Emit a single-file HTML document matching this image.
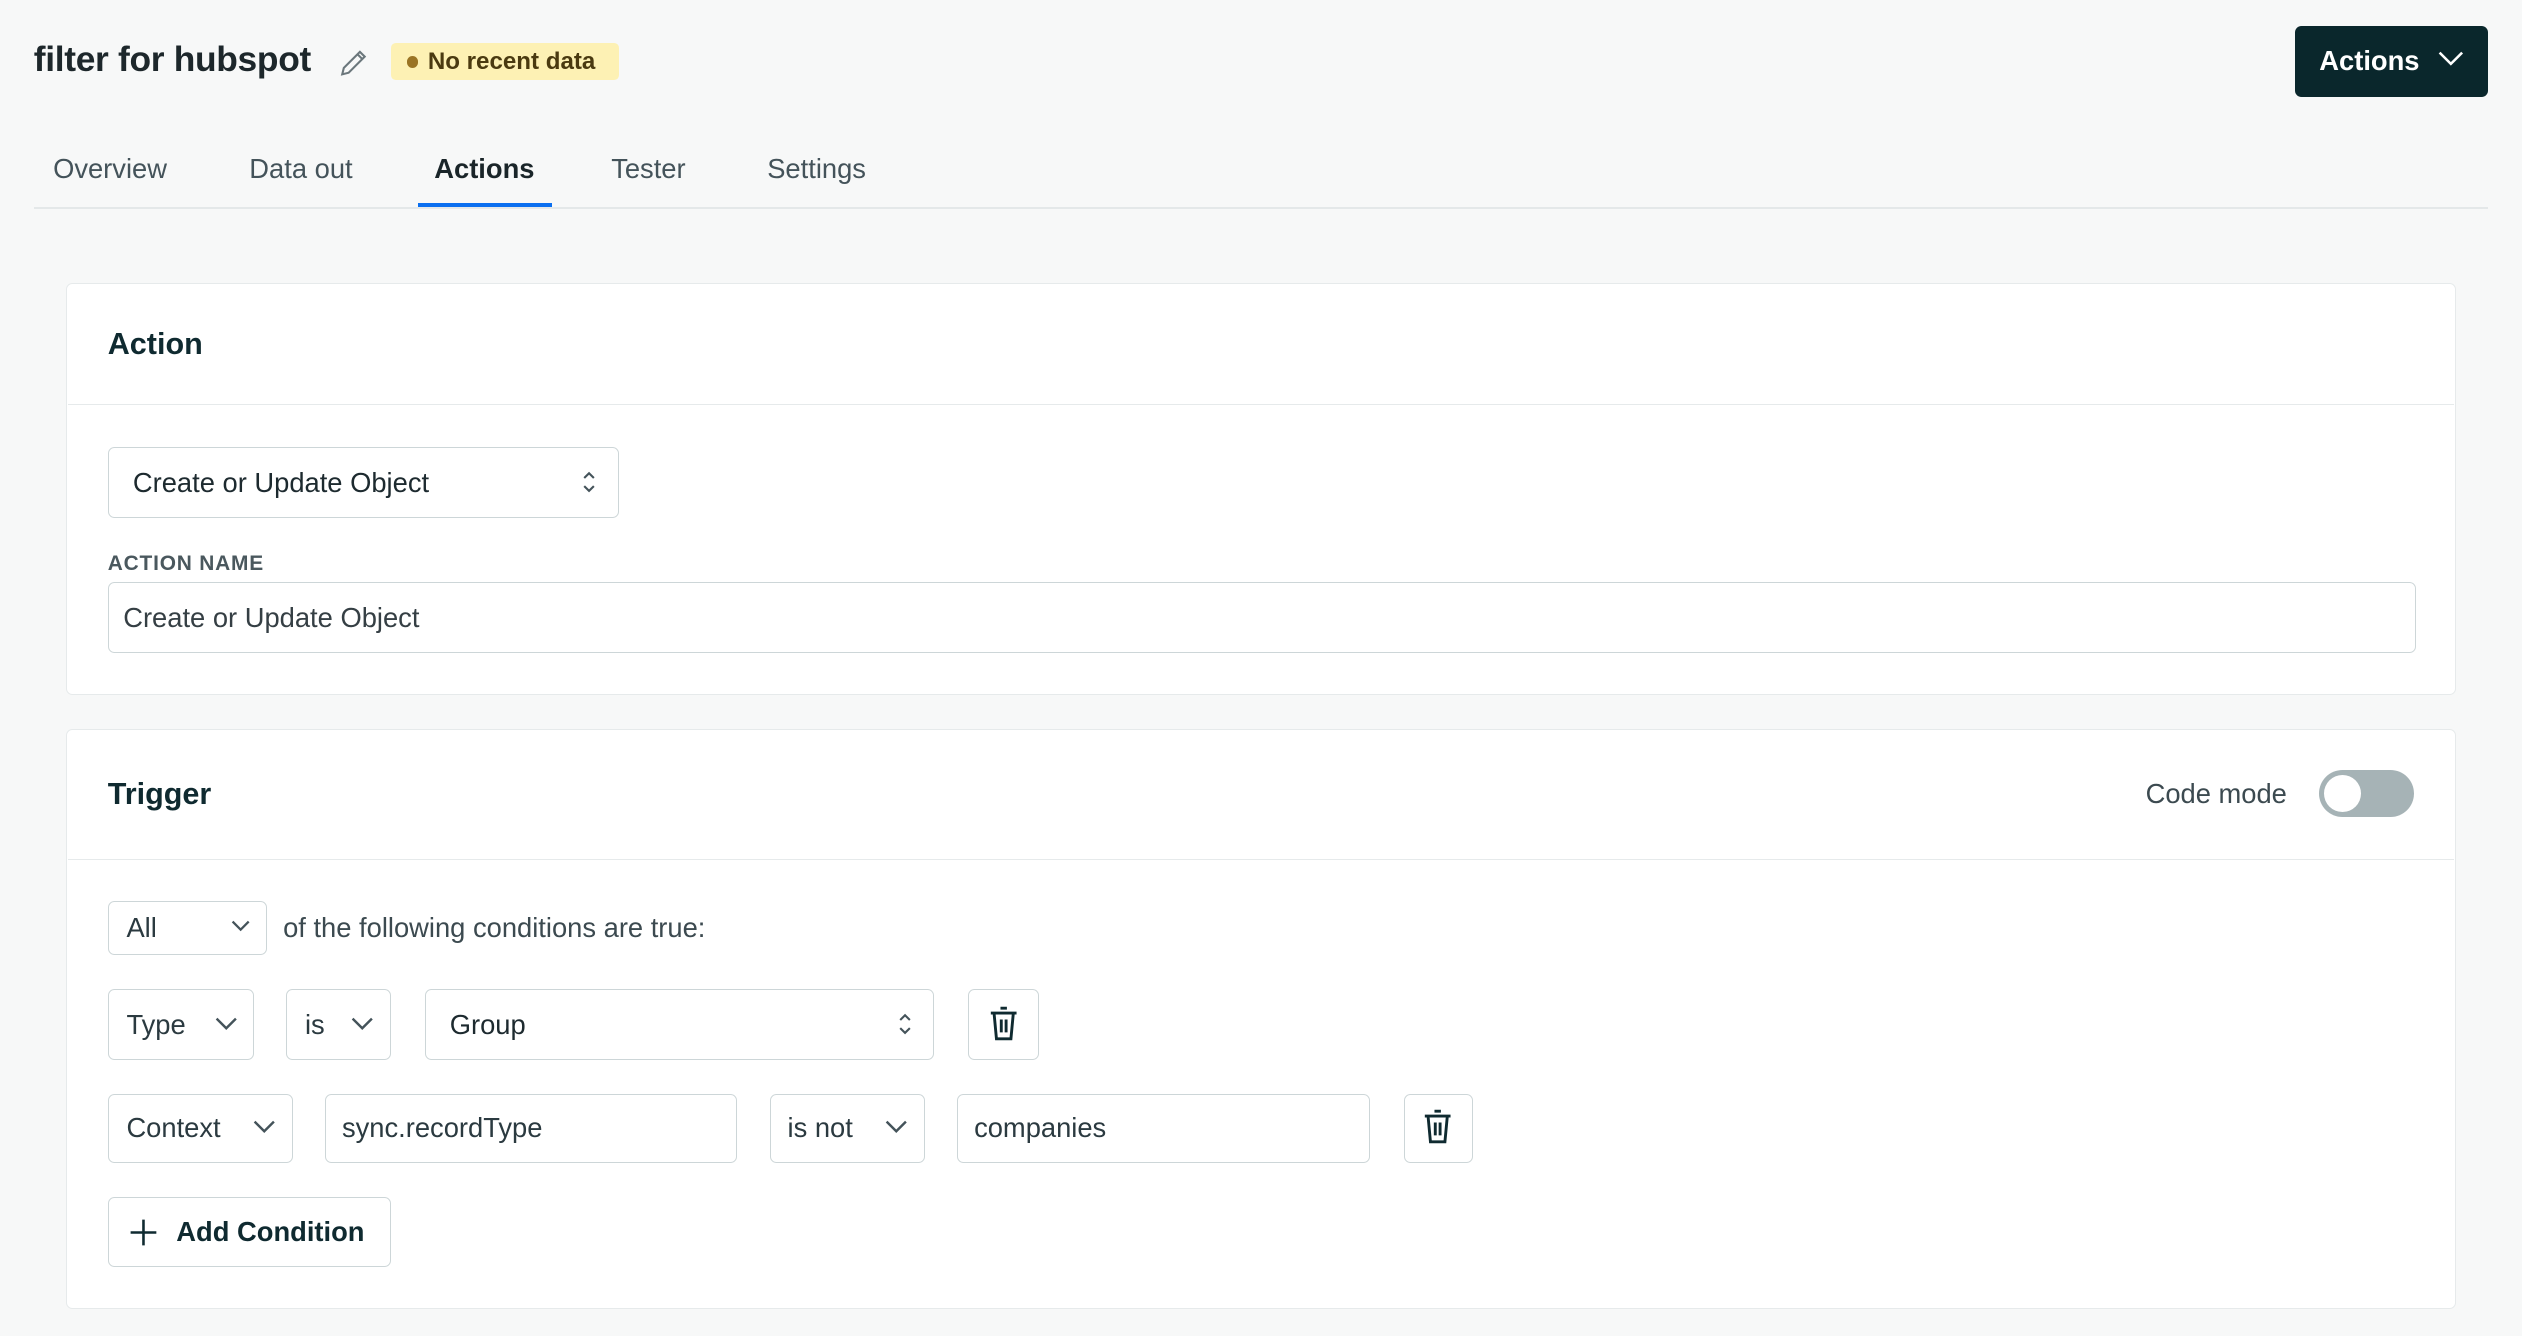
<!DOCTYPE html>
<html><head><meta charset="utf-8"><style>
html,body{margin:0;padding:0;background:#f7f8f8;width:2522px;height:1336px;overflow:hidden}
#w{zoom:1.6084;position:relative;width:1568px;height:831px;font-family:"Liberation Sans",sans-serif;color:#1f2d33}
.a{position:absolute}
.box{position:absolute;background:#fff;border:1px solid #cdd6d8;border-radius:4px;box-sizing:border-box;font-size:17px;color:#2b3a40;display:flex;align-items:center;padding-left:11px}
.card{position:absolute;background:#fff;border:1px solid #e6eaeb;border-radius:4px;box-sizing:border-box}
.chev{position:absolute;right:10px;top:50%;margin-top:-5px}
.tab{position:absolute;top:95px;font-size:17px;color:#44535a}
</style></head><body><div id="w">
<div class="a" style="left:21px;top:25px;font-size:22px;font-weight:bold;color:#1d272b;letter-spacing:-0.2px">filter for hubspot</div>
<svg class="a" style="left:211px;top:29px" width="18" height="19" viewBox="0 0 18 19"><path d="M2 17l1-4L13 3l3 3L6 16z M11.5 4.5l3 3" fill="none" stroke="#6b777c" stroke-width="1.3"/></svg>
<div class="a" style="left:243px;top:27px;width:142px;height:23px;background:#fdf1b4;border-radius:3px;font-size:15px;font-weight:bold;color:#4a3a10;line-height:23px;padding-left:23px;box-sizing:border-box">No recent data</div>
<div class="a" style="left:253px;top:35px;width:7px;height:7px;border-radius:50%;background:#9a7424"></div>
<div class="a" style="left:1427px;top:16px;width:120px;height:44px;background:#0a272c;border-radius:4px;color:#fff;font-size:17px;font-weight:bold;line-height:44px;padding-left:15px;box-sizing:border-box">Actions</div>
<svg class="a" style="left:1516px;top:32px" width="16" height="10"><path d="M1 1l7 7 7-7" fill="none" stroke="#fff" stroke-width="1.6"/></svg>
<div class="tab" style="left:33px">Overview</div>
<div class="tab" style="left:155px">Data out</div>
<div class="tab" style="left:270px;font-weight:bold;color:#1a2529">Actions</div>
<div class="tab" style="left:380px">Tester</div>
<div class="tab" style="left:477px">Settings</div>
<div class="a" style="left:21px;top:129px;width:1526px;height:1px;background:#e4e8e9"></div>
<div class="a" style="left:260px;top:126px;width:83px;height:3px;background:#0a6ff0"></div>

<div class="card" style="left:41px;top:176px;width:1486px;height:256px"></div>
<div class="a" style="left:67px;top:203px;font-size:19px;font-weight:bold;color:#0f2a30">Action</div>
<div class="a" style="left:42px;top:251px;width:1484px;height:1px;background:#e6eaeb"></div>
<div class="box" style="left:67px;top:278px;width:318px;height:44px;padding-left:15px;color:#1d2a2f">Create or Update Object</div>
<svg class="a" style="left:361px;top:292px" width="10" height="15"><path d="M2 5l3-3 3 3M2 10l3 3 3-3" fill="none" stroke="#44535a" stroke-width="1.3"/></svg>
<div class="a" style="left:67px;top:343px;font-size:13px;font-weight:bold;letter-spacing:.5px;color:#4a585e">ACTION NAME</div>
<div class="box" style="left:67px;top:362px;width:1435px;height:44px;padding-left:9px;color:#353f44">Create or Update Object</div>

<div class="card" style="left:41px;top:453px;width:1486px;height:361px"></div>
<div class="a" style="left:67px;top:483px;font-size:19px;font-weight:bold;color:#0f2a30">Trigger</div>
<div class="a" style="left:1334px;top:484px;font-size:17px;color:#3c4a50">Code mode</div>
<div class="a" style="left:1442px;top:479px;width:59px;height:29px;border-radius:15px;background:#a6b3b6"></div>
<div class="a" style="left:1445px;top:482px;width:23px;height:23px;border-radius:50%;background:#fff"></div>
<div class="a" style="left:42px;top:534px;width:1484px;height:1px;background:#e6eaeb"></div>

<div class="box" style="left:67px;top:560px;width:99px;height:34px">All<svg class="chev" width="12" height="8"><path d="M1 1l5 5 5-5" fill="none" stroke="#44535a" stroke-width="1.4"/></svg></div>
<div class="a" style="left:176px;top:567px;font-size:17px;color:#3c4a50">of the following conditions are true:</div>

<div class="box" style="left:67px;top:615px;width:91px;height:44px">Type<svg class="chev" width="14" height="9"><path d="M1 1l6 6 6-6" fill="none" stroke="#44535a" stroke-width="1.5"/></svg></div>
<div class="box" style="left:178px;top:615px;width:65px;height:44px">is<svg class="chev" width="14" height="9"><path d="M1 1l6 6 6-6" fill="none" stroke="#44535a" stroke-width="1.5"/></svg></div>
<div class="box" style="left:264px;top:615px;width:317px;height:44px;padding-left:15px;color:#1d2a2f">Group</div>
<svg class="a" style="left:558px;top:629px" width="10" height="15"><path d="M2 5l3-3 3 3M2 10l3 3 3-3" fill="none" stroke="#44535a" stroke-width="1.3"/></svg>
<div class="box" style="left:602px;top:615px;width:44px;height:44px"></div>
<svg class="a" style="left:613px;top:625px" width="22" height="24" viewBox="0 0 22 24"><path d="M9 2h4M3 5h16M5 5l1.5 16h9L17 5M9.5 9v8M12.5 9v8" fill="none" stroke="#0f2a30" stroke-width="1.8"/></svg>

<div class="box" style="left:67px;top:680px;width:115px;height:43px">Context<svg class="chev" width="14" height="9"><path d="M1 1l6 6 6-6" fill="none" stroke="#44535a" stroke-width="1.5"/></svg></div>
<div class="box" style="left:202px;top:680px;width:256px;height:43px;padding-left:10px">sync.recordType</div>
<div class="box" style="left:479px;top:680px;width:96px;height:43px;padding-left:10px">is not<svg class="chev" width="14" height="9"><path d="M1 1l6 6 6-6" fill="none" stroke="#44535a" stroke-width="1.5"/></svg></div>
<div class="box" style="left:595px;top:680px;width:257px;height:43px;padding-left:10px">companies</div>
<div class="box" style="left:873px;top:680px;width:43px;height:43px"></div>
<svg class="a" style="left:883px;top:689px" width="22" height="24" viewBox="0 0 22 24"><path d="M9 2h4M3 5h16M5 5l1.5 16h9L17 5M9.5 9v8M12.5 9v8" fill="none" stroke="#0f2a30" stroke-width="1.8"/></svg>

<div class="box" style="left:67px;top:744px;width:176px;height:44px;padding-left:42px;font-weight:bold;color:#0f2a30">Add Condition</div>
<svg class="a" style="left:80px;top:757px" width="18" height="18"><path d="M9 1v16M1 9h16" stroke="#0f2a30" stroke-width="1.6"/></svg>
</div></body></html>
